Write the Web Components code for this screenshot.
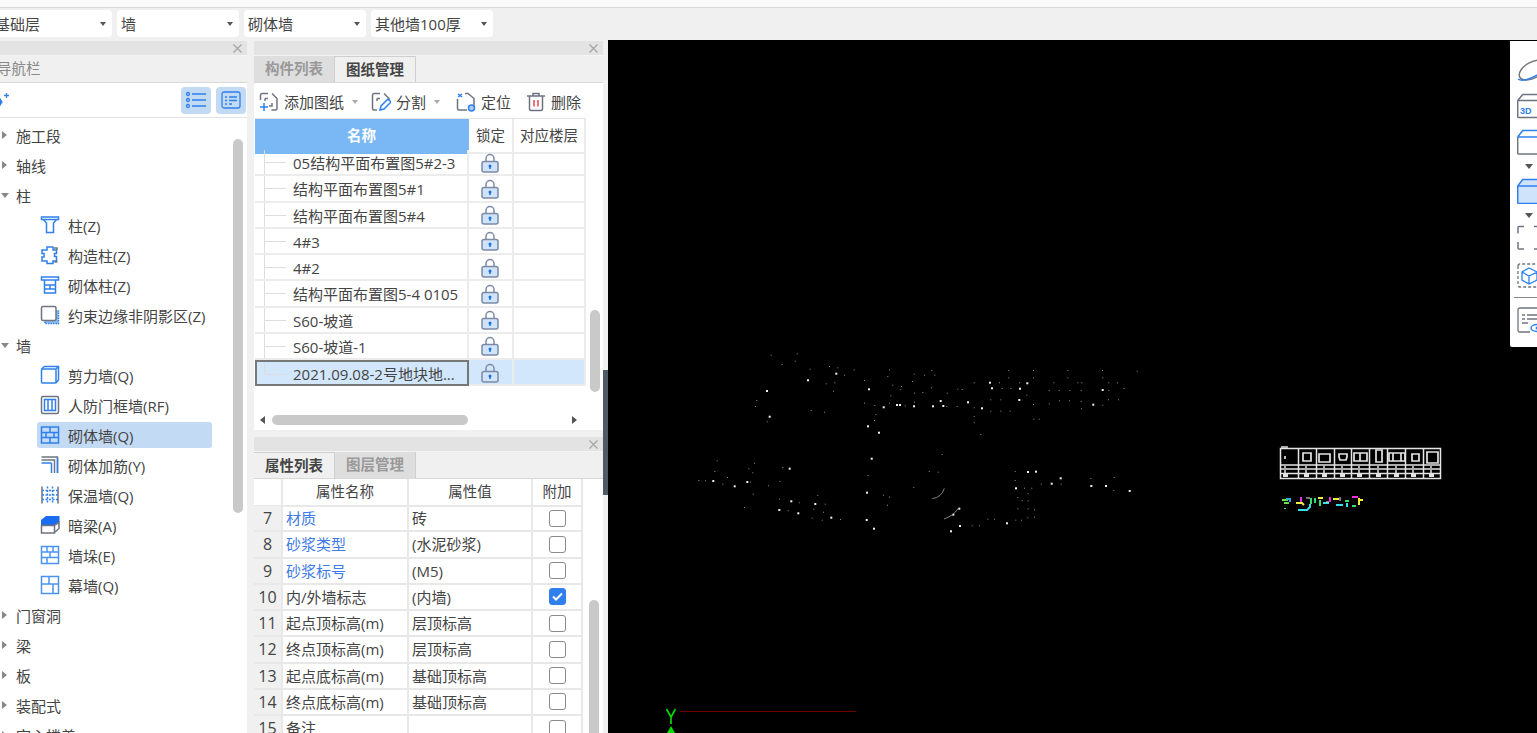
<!DOCTYPE html>
<html lang="zh">
<head>
<meta charset="utf-8">
<title>GTJ</title>
<style>
  html, body { margin: 0; height: 733px; overflow: hidden; background: #f0f0f0; }
  body { font: 15px "Open Sans", "Noto Sans CJK SC", "Liberation Sans", sans-serif; color: #444; }
</style>
</head>
<body>
<gl-app>
  <gl-topbar slot="top">
    <gl-select label="基础层" first></gl-select>
    <gl-select label="墙"></gl-select>
    <gl-select label="砌体墙"></gl-select>
    <gl-select label="其他墙100厚"></gl-select>
  </gl-topbar>

  <gl-dock slot="left" tabs="导航栏" plain>
    <gl-nav-tools></gl-nav-tools>
    <gl-nav-tree>
      <gl-nav-item group="closed" label="施工段"></gl-nav-item>
      <gl-nav-item group="closed" label="轴线"></gl-nav-item>
      <gl-nav-item group="open" label="柱"></gl-nav-item>
      <gl-nav-item icon="zhu" label="柱(Z)"></gl-nav-item>
      <gl-nav-item icon="gzz" label="构造柱(Z)"></gl-nav-item>
      <gl-nav-item icon="qtz" label="砌体柱(Z)"></gl-nav-item>
      <gl-nav-item icon="yssb" label="约束边缘非阴影区(Z)"></gl-nav-item>
      <gl-nav-item group="open" label="墙"></gl-nav-item>
      <gl-nav-item icon="jlq" label="剪力墙(Q)"></gl-nav-item>
      <gl-nav-item icon="rfm" label="人防门框墙(RF)"></gl-nav-item>
      <gl-nav-item icon="qtq" label="砌体墙(Q)" selected></gl-nav-item>
      <gl-nav-item icon="qtjj" label="砌体加筋(Y)"></gl-nav-item>
      <gl-nav-item icon="bwq" label="保温墙(Q)"></gl-nav-item>
      <gl-nav-item icon="al" label="暗梁(A)"></gl-nav-item>
      <gl-nav-item icon="qd" label="墙垛(E)"></gl-nav-item>
      <gl-nav-item icon="mq" label="幕墙(Q)"></gl-nav-item>
      <gl-nav-item group="closed" label="门窗洞"></gl-nav-item>
      <gl-nav-item group="closed" label="梁"></gl-nav-item>
      <gl-nav-item group="closed" label="板"></gl-nav-item>
      <gl-nav-item group="closed" label="装配式"></gl-nav-item>
      <gl-nav-item group="closed" label="空心楼盖"></gl-nav-item>
    </gl-nav-tree>
  </gl-dock>

  <gl-dock slot="mid-top" tabs="构件列表|图纸管理" active="1">
    <gl-drawing-tools></gl-drawing-tools>
    <gl-drawing-table></gl-drawing-table>
  </gl-dock>

  <gl-dock slot="mid-bottom" tabs="属性列表|图层管理" active="0">
    <gl-prop-table></gl-prop-table>
  </gl-dock>

  <gl-cad-canvas slot="canvas"></gl-cad-canvas>
</gl-app>

<script>
const BLUE = '#2f80ed';
const GREY = '#6d7480';

function svg(w, h, body) {
  return `<svg width="${w}" height="${h}" viewBox="0 0 ${w} ${h}" fill="none" stroke-width="1.5">${body}</svg>`;
}

// Iconos del arbol de navegacion (20x20)
const NAV_ICONS = {
  zhu: svg(20, 20, `<g stroke="${BLUE}"><path d="M1.5 2h17v2.5h-17z"/><path d="M3.5 4.500l3 3.500v9.500h7v-9.500l3-3.500"/></g>`),
  gzz: svg(20, 20, `<path stroke="${BLUE}" d="M7 2h6v3h3.500v3.500h-2v3h2v4.500h-3.500v2.500h-6v-2.500h-5v-4h2v-3.500h-2v-3.500h5z"/><path stroke="${GREY}" d="M14 3h3v2M16.500 15v2h-2"/>`),
  qtz: svg(20, 20, `<g stroke="${BLUE}"><path d="M1.500 2h17v3h-17z"/><path d="M4.500 5v13h11v-13M4.500 10h11M4.500 14h11M10 10v4"/></g>`),
  yssb: svg(20, 20, `<path fill="#8fbdf2" stroke="${BLUE}" stroke-dasharray="1.500 1" d="M5 6h13.500v12.500h-13.500z"/><rect x="1.500" y="1.500" width="14.500" height="14" rx="1.500" fill="#fff" stroke="${GREY}"/>`),
  jlq: svg(20, 20, `<g stroke="${BLUE}"><rect x="1.500" y="4" width="14.500" height="14" rx="1"/><path d="M1.500 4l3-2.500h14v13.500l-2.500 3M16 4l2.500-2.500"/></g>`),
  rfm: svg(20, 20, `<rect x="1.500" y="1.500" width="17" height="17" rx="1.500" stroke="${GREY}"/><path stroke="${BLUE}" d="M4.500 4.500h11v11h-11zM8 4.500v11M12 4.500v11"/>`),
  qtq: svg(20, 20, `<g stroke="${BLUE}"><rect x="1.500" y="2" width="17" height="16"/><path d="M1.500 7.500h17M1.500 12.500h17M10 2v5.500M6 7.500v5M14 7.500v5M10 12.500v5.500"/></g>`),
  qtjj: svg(20, 20, `<path stroke="${GREY}" d="M1.500 2h16v16M1.500 5h13v13"/><path stroke="${BLUE}" d="M1.500 8h10M11.500 8v10M17.500 3v15"/>`),
  bwq: svg(20, 20, `<path stroke="${GREY}" d="M2 1.500v17M18 1.500v17"/><path stroke="${BLUE}" stroke-dasharray="2 1.500" d="M2 5.500h16M2 10h16M2 14.500h16M7.500 1.500v17M12.500 1.500v17"/>`),
  al: svg(20, 20, `<path fill="#1a6cf0" d="M1 5l5-4h13.500v6l-5 3h-13.500z"/><path stroke="${GREY}" d="M1.500 10.500h13v7.500h-13zM14.500 10.500l4.500-3v6l-4.500 4"/>`),
  qd: svg(20, 20, `<g stroke="#4a94ef"><rect x="1.500" y="1.500" width="17" height="17"/><path d="M1.500 7h17M1.500 12.500h17M7 1.500v5.500M13 1.500v5.500M10 7v5.500M7 12.500v6"/></g>`),
  mq: svg(20, 20, `<g stroke="#4a94ef"><rect x="1.500" y="1.500" width="17" height="17"/><path d="M1.500 9h17M9 1.500v7.500M13 9v9.500"/></g>`)
};

const LOCK = svg(18, 20, `<path stroke="#7c8aa5" d="M5 9v-3.500a4 4 0 0 1 8 0v3.500"/><rect x="1" y="8.500" width="16" height="10.500" rx="2" fill="#cfe3fb" stroke="#7c8aa5"/><circle cx="9" cy="13" r="1.500" fill="#1b6fd8"/><path stroke="#1b6fd8" d="M9 13.500v2.500"/>`);

const CORNERS = `<path stroke="${GREY}" d="M9 1.500h-6a1.500 1.500 0 0 0-1.500 1.500v5M13 1.500l5 5v10a1.500 1.500 0 0 1-1.500 1.500h-4"/>`;

// Iconos de la barra de dibujos (20x20)
const TOOL_ICONS = {
  add: svg(20, 20, `${CORNERS}<path stroke="${GREY}" d="M6 6.500h3M6 6.500v2.500M10 14h3v-3"/><path stroke="${BLUE}" d="M1 15h8M5 11v8"/>`),
  split: svg(20, 20, `<path stroke="${GREY}" d="M9 1.500h-6a1.500 1.500 0 0 0-1.500 1.500v13.500a1.500 1.500 0 0 0 1.500 1.500h3M13 1.500l5 5v2M6 6.500h3M6 6.500v2.500"/><path stroke="${BLUE}" d="M9 18l1-4 7-7 3 3-7 7z"/>`),
  locate: svg(20, 20, `<path stroke="${GREY}" d="M9 1.500h3l6 5v7M1.500 7v9.500a1.500 1.500 0 0 0 1.500 1.500h8"/><path stroke="${BLUE}" d="M2 5l4-3M2 2l4 3"/><circle cx="15.500" cy="16" r="3" fill="#a9cdf6" stroke="${BLUE}"/>`),
  trash: svg(20, 20, `<path stroke="${GREY}" d="M1 4h18M7 4v-2.500h6v2.500M3.500 4v13a1.500 1.500 0 0 0 1.500 1.500h10a1.500 1.500 0 0 0 1.500-1.500v-13"/><path stroke="#e5484d" d="M8 8v6.500M12 8v6.500"/>`)
};

// Contenedor de toda la pantalla
class GlApp extends HTMLElement {
  constructor() {
    super();
    this.attachShadow({ mode: 'open' });
    this.shadowRoot.innerHTML = `
      <style>
        :host { display: flex; flex-direction: column; height: 733px; overflow: hidden; }
        .main { flex: 1; min-height: 0; display: flex; padding-top: 1px; }
        .left { width: 247px; flex: none; margin-right: 7px; display: flex; }
        .mid { width: 349px; flex: none; display: flex; flex-direction: column; gap: 7px; }
        .mid-top { height: 389px; flex: none; display: flex; }
        .mid-bottom { flex: 1; min-height: 0; display: flex; }
        .splitter { width: 5px; flex: none; margin-top: -1px; }
        .splitter i { display: block; height: 125px; margin-top: 330px; background: #505a64; }
        .canvas { flex: 1; min-width: 0; margin-top: -1px; display: flex; }
        ::slotted(:not(gl-topbar)) { flex: 1; min-width: 0; }
      </style>
      <slot name="top"></slot>
      <div class="main">
        <div class="left"><slot name="left"></slot></div>
        <div class="mid">
          <div class="mid-top"><slot name="mid-top"></slot></div>
          <div class="mid-bottom"><slot name="mid-bottom"></slot></div>
        </div>
        <div class="splitter"><i></i></div>
        <div class="canvas"><slot name="canvas"></slot></div>
      </div>`;
  }
}
customElements.define('gl-app', GlApp);

class GlTopbar extends HTMLElement {
  constructor() {
    super();
    this.attachShadow({ mode: 'open' });
    this.shadowRoot.innerHTML = `
      <style>
        :host { display: block; height: 40px; flex: none; }
        .strip { height: 7px; background: #fbfbfb; border-bottom: 1px solid #d9d9d9; }
        .row { display: flex; gap: 5px; padding-top: 2px; }
      </style>
      <div class="strip"></div>
      <div class="row"><slot></slot></div>`;
  }
}
customElements.define('gl-topbar', GlTopbar);

class GlSelect extends HTMLElement {
  constructor() {
    super();
    this.attachShadow({ mode: 'open' });
  }
  connectedCallback() {
    this.shadowRoot.innerHTML = `
      <style>
        :host { display: flex; align-items: center; justify-content: space-between; box-sizing: border-box;
                width: 122px; height: 27px; padding: 0 6px 0 4px; background: #fff; border-radius: 4px; font-size: 15px; }
        :host([first]) { margin-left: -9px; width: 121px; }
        i { border: 3.500px solid transparent; border-top: 4px solid #555; border-bottom: 0; }
      </style>
      <span>${this.getAttribute('label')}</span><i></i>`;
  }
}
customElements.define('gl-select', GlSelect);

// Panel acoplable: barra gris con la equis, pestanas y contenido
class GlDock extends HTMLElement {
  constructor() {
    super();
    this.attachShadow({ mode: 'open' });
  }
  connectedCallback() {
    const active = Number(this.getAttribute('active'));
    const plain = this.hasAttribute('plain');
    const tabs = this.getAttribute('tabs').split('|').map((t, i) =>
      `<span class="tab ${i === active ? 'on' : ''}">${t}</span>`).join('');
    this.shadowRoot.innerHTML = `
      <style>
        :host { display: flex; flex-direction: column; background: #fff; min-height: 0; overflow: hidden; }
        .bar { height: 14px; flex: none; background: #e3e3e3; display: flex; justify-content: flex-end; align-items: center; padding-right: 4px; }
        .tabs { height: 28px; flex: none; background: #f0f0f0; display: flex; border-bottom: 1px solid #d8d8d8; border-top: 1px solid #f4f4f4; box-sizing: border-box; }
        .tab { width: 81px; box-sizing: border-box; text-align: center; line-height: 26px; font-size: 14.500px; font-weight: 700; color: #999; background: #dedede; border-right: 1px solid #cfcfcf; }
        .tab.on { color: #444; background: #f0f0f0; border-top: 1px solid #cfcfcf; }
        .tabs.plain .tab { width: auto; margin-left: -3px; background: none; border: 0; font-weight: 400; color: #888; }
        .body { flex: 1; min-height: 0; display: flex; flex-direction: column; }
        .x { width: 11px; height: 11px; }
      </style>
      <div class="bar"><svg class="x" viewBox="0 0 11 11" stroke="#a5a5a5" stroke-width="1.200"><path d="M1.500 1.500l8 8M9.500 1.500l-8 8"/></svg></div>
      <div class="tabs ${plain ? 'plain' : ''}">${tabs}</div>
      <div class="body"><slot></slot></div>`;
  }
}
customElements.define('gl-dock', GlDock);

class GlNavTools extends HTMLElement {
  constructor() {
    super();
    this.attachShadow({ mode: 'open' });
    this.shadowRoot.innerHTML = `
      <style>
        :host { display: flex; align-items: center; box-sizing: border-box; height: 35px; flex: none; padding: 0 1px 0 0; gap: 5px; border-bottom: 1px solid #e2e2e2; }
        .spark { margin-right: auto; }
        .b { width: 30px; height: 27px; background: #c2daf3; border-radius: 4px; display: flex; align-items: center; justify-content: center; }
      </style>
      <svg class="spark" width="10" height="14" viewBox="0 0 10 14" stroke="${BLUE}" stroke-width="1.300" fill="none"><path d="M6.500 0v5M4 2.500h5"/><path d="M-2 9l2-3 2 3-2 3z" fill="${BLUE}"/></svg>
      <span class="b"><svg width="20" height="18" fill="none" stroke="${BLUE}" stroke-width="1.300"><path d="M6 3h14M6 9h14M6 15h14"/><circle cx="2" cy="3" r="1.500"/><circle cx="2" cy="9" r="1.500"/><circle cx="2" cy="15" r="1.500"/></svg></span>
      <span class="b"><svg width="20" height="18" fill="none" stroke="${BLUE}" stroke-width="1.300"><rect x="1" y="1" width="18" height="16" rx="2"/><path d="M4 6h2M8 6h8M4 9.500h2M8 9.500h8M4 13h2M8 13h3"/></svg></span>`;
  }
}
customElements.define('gl-nav-tools', GlNavTools);

class GlNavTree extends HTMLElement {
  constructor() {
    super();
    this.attachShadow({ mode: 'open' });
    this.shadowRoot.innerHTML = `
      <style>
        :host { display: flex; flex: 1; min-height: 0; overflow: hidden; }
        .list { flex: 1; min-width: 0; padding-top: 2px; }
        .track { width: 10px; flex: none; margin: 21px 4px 0 0; }
        .thumb { height: 374px; background: #c9c9c9; border-radius: 5px; }
      </style>
      <div class="list"><slot></slot></div>
      <div class="track"><div class="thumb"></div></div>`;
  }
}
customElements.define('gl-nav-tree', GlNavTree);

class GlNavItem extends HTMLElement {
  constructor() {
    super();
    this.attachShadow({ mode: 'open' });
  }
  connectedCallback() {
    const group = this.getAttribute('group');
    const icon = NAV_ICONS[this.getAttribute('icon')] || '';
    const arrow = group === 'open'
      ? '<i class="down"></i>'
      : '<i class="right"></i>';
    const inner = group
      ? `${arrow}<span>${this.getAttribute('label')}</span>`
      : `<span class="pill">${icon}<span>${this.getAttribute('label')}</span></span>`;
    this.shadowRoot.innerHTML = `
      <style>
        :host { display: flex; align-items: center; height: 30px; font-size: 15px; white-space: nowrap; }
        i { display: block; flex: none; margin: 0 7px 0 1px; border-style: solid; border-color: transparent; }
        i.right { width: 0; margin-left: 2px; margin-right: 9px; border-width: 4px 0 4px 5px; border-left-color: #888; }
        i.down { border-width: 5px 4px 0; border-top-color: #888; margin-right: 7px; }
        .pill { display: flex; align-items: center; gap: 8px; margin-left: 37px; padding-left: 3px; width: 172px; height: 26px; border-radius: 3px; }
        :host([selected]) .pill { background: #c2daf3; }
        svg { flex: none; }
      </style>
      ${inner}`;
  }
}
customElements.define('gl-nav-item', GlNavItem);

class GlDrawingTools extends HTMLElement {
  constructor() {
    super();
    this.attachShadow({ mode: 'open' });
    this.shadowRoot.innerHTML = `
      <style>
        :host { display: flex; align-items: center; height: 35px; flex: none; box-sizing: border-box; padding: 2px 0 0 5px; font-size: 15px; white-space: nowrap; }
        .t { display: flex; align-items: center; gap: 5px; }
        i { display: block; margin: 0 16px 0 8px; border: 3px solid transparent; border-top: 4px solid #aaa; border-bottom: 0; }
      </style>
      <span class="t">${TOOL_ICONS.add}添加图纸</span><i style="margin-right:13px"></i>
      <span class="t">${TOOL_ICONS.split}分割</span><i></i>
      <span class="t" style="margin-right:15px">${TOOL_ICONS.locate}定位</span>
      <span class="t">${TOOL_ICONS.trash}删除</span>`;
  }
}
customElements.define('gl-drawing-tools', GlDrawingTools);

const DRAWINGS = ['05结构平面布置图5#2-3', '结构平面布置图5#1', '结构平面布置图5#4', '4#3', '4#2',
  '结构平面布置图5-4 0105', 'S60-坡道', 'S60-坡道-1', '2021.09.08-2号地块地...'];

class GlDrawingTable extends HTMLElement {
  constructor() {
    super();
    this.attachShadow({ mode: 'open' });
    const filas = DRAWINGS.map((nombre, i) => `
      <div class="row ${i === DRAWINGS.length - 1 ? 'sel' : ''}">
        <div class="name"><b></b>${nombre}</div>
        <div class="lock">${LOCK}</div>
        <div class="floor"></div>
      </div>`).join('');
    this.shadowRoot.innerHTML = `
      <style>
        :host { display: flex; flex-direction: column; flex: 1; min-height: 0; }
        .area { flex: 1; min-height: 0; display: flex; }
        .table { width: 331px; flex: none; margin-left: 1px; border-top: 1px solid #e4e4e4; }
        .head, .row { display: grid; grid-template-columns: 214px 45px 72px; }
        .head { height: 31px; line-height: 33px; text-align: center; font-size: 14.500px; }
        .head div { box-sizing: border-box; border-right: 2px solid #ececec; border-bottom: 2px solid #ececec; }
        .head .n { background: #7ab8f5; color: #fff; font-weight: 700; border: 0; border-right: 1px solid #7ab8f5; }
        .row { height: 26.250px; }
        .row > div { box-sizing: border-box; border-right: 2px solid #ececec; border-bottom: 2px solid #ececec; }
        .name { position: relative; padding-left: 38px; line-height: 26px; white-space: nowrap; overflow: hidden; }
        .name b { position: absolute; left: 9px; top: 0; bottom: -2px; width: 21px; border-left: 1px solid #ddd; }
        .name b::after { content: ''; position: absolute; left: 0; right: 0; top: 12px; border-top: 1px solid #ddd; }
        .lock { display: flex; align-items: center; justify-content: center; padding: 1px 2px 0 0; }
        .sel > div { background: #d2e7fc; }
        .sel .name { border: 2px solid #777; line-height: 24px; padding-left: 36px; }
        .sel .name b { left: 7px; bottom: 10px; top: 0; }
        .vtrack { width: 10px; margin: 192px 0 0 4px; }
        .vthumb { height: 82px; background: #c9c9c9; border-radius: 5px; }
        .hbar { height: 21px; flex: none; display: flex; align-items: center; padding: 0 26px 0 6px; box-sizing: border-box; }
        .hbar i { border: 4px solid transparent; }
        .hbar .l { border-right: 5px solid #555; border-left: 0; margin-right: 7px; }
        .hbar .r { border-left: 5px solid #555; border-right: 0; margin-left: auto; }
        .hthumb { width: 196px; height: 10px; background: #c9c9c9; border-radius: 5px; }
      </style>
      <div class="area">
        <div class="table">
          <div class="head"><div class="n">名称</div><div>锁定</div><div>对应楼层</div></div>
          ${filas}
        </div>
        <div class="vtrack"><div class="vthumb"></div></div>
      </div>
      <div class="hbar"><i class="l"></i><div class="hthumb"></div><i class="r"></i></div>`;
  }
}
customElements.define('gl-drawing-table', GlDrawingTable);

const PROPS = [
  [7, '材质', '砖', 0, 1], [8, '砂浆类型', '(水泥砂浆)', 0, 1], [9, '砂浆标号', '(M5)', 0, 1],
  [10, '内/外墙标志', '(内墙)', 1, 0], [11, '起点顶标高(m)', '层顶标高', 0, 0], [12, '终点顶标高(m)', '层顶标高', 0, 0],
  [13, '起点底标高(m)', '基础顶标高', 0, 0], [14, '终点底标高(m)', '基础顶标高', 0, 0], [15, '备注', '', 0, 0]
];

class GlPropTable extends HTMLElement {
  constructor() {
    super();
    this.attachShadow({ mode: 'open' });
    const filas = PROPS.map(([n, nombre, valor, marcado, azul]) => `
      <div class="row">
        <div class="num">${n}</div>
        <div class="${azul ? 'blue' : ''}">${nombre}</div>
        <div>${valor}</div>
        <div class="chk"><span class="${marcado ? 'on' : ''}">${marcado ? '<svg width="17" height="17" fill="none" stroke="#fff" stroke-width="2"><path d="M4 8.500l3 3 6-6"/></svg>' : ''}</span></div>
      </div>`).join('');
    this.shadowRoot.innerHTML = `
      <style>
        :host { display: flex; flex: 1; min-height: 0; overflow: hidden; }
        .table { width: 329px; flex: none; }
        .row, .head { display: grid; grid-template-columns: 29px 126px 124px 50px; }
        .head { height: 27px; line-height: 26px; text-align: center; font-size: 14.500px; }
        .head div, .row > div { box-sizing: border-box; border-right: 2px solid #e8e8e8; border-bottom: 2px solid #e8e8e8; }
        .row { height: 26.250px; line-height: 24px; white-space: nowrap; }
        .row > div { padding-left: 3px; }
        .row > .num { padding: 0; background: #f0f0f0; text-align: center; font-size: 16px; }
        .blue { color: #3f7be8; }
        .row > .chk { padding: 0; display: flex; align-items: center; justify-content: center; }
        .chk span { display: block; width: 17px; height: 17px; box-sizing: border-box; border: 1px solid #8a8a8a; border-radius: 3px; }
        .chk span.on { background: ${BLUE}; border-color: ${BLUE}; }
        .chk svg { display: block; margin: -1px; }
        .vtrack { width: 10px; margin: 121px 0 0 6px; }
        .vthumb { height: 200px; background: #c9c9c9; border-radius: 5px; }
      </style>
      <div class="table">
        <div class="head"><div></div><div>属性名称</div><div>属性值</div><div>附加</div></div>
        ${filas}
      </div>
      <div class="vtrack"><div class="vthumb"></div></div>`;
  }
}
customElements.define('gl-prop-table', GlPropTable);

// Puntos del plano, en coordenadas de la captura ampliada x3 (origen 690,340)
const BRIGHT = [436,98,351,118,228,150,236,227,534,145,578,199,618,192,627,192,669,196,726,196,757,195,749,180,831,184,873,202,897,125,903,142,987,143,1009,127,985,177,1235,147,1207,191,531,256,564,275,542,353,296,383,1011,393,1035,392,975,442,1109,412,1082,428,1245,435,1201,435,1316,450,373,489,301,481,322,517,421,530,527,537,549,563,528,455,805,503,787,521,807,555,780,571,948,547,131,436,67,420,169,423,265,507];
const DIM = [242,44,320,40,275,72,314,62,359,86,417,78,442,82,462,104,491,88,407,130,433,127,429,152,199,180,195,198,362,210,402,215,230,244,522,120,597,88,592,108,607,134,633,138,631,148,601,166,522,188,553,195,597,188,644,196,672,185,672,158,666,123,671,101,702,104,724,90,733,104,723,142,697,156,770,158,769,198,800,198,802,146,815,147,851,127,851,202,851,228,851,247,871,282,556,222,552,240,901,178,931,178,901,212,931,212,959,212,927,127,935,144,961,144,955,90,955,112,987,127,1029,90,1029,112,1009,164,1029,192,1030,236,1046,236,1090,127,1076,150,1106,150,1138,150,1162,127,1174,127,1172,150,1107,181,1137,181,1172,183,1173,205,1076,190,1132,90,1132,112,1236,90,1237,112,1255,127,1281,127,1301,144,1255,150,1254,178,1284,178,1237,194,1340,92,80,361,192,368,73,393,175,385,187,397,277,381,111,411,25,420,45,421,97,431,180,425,268,423,234,436,188,461,162,501,267,476,326,487,382,465,404,491,370,506,399,515,293,511,365,533,395,539,450,537,533,405,579,464,597,470,591,494,755,342,716,393,743,395,670,441,974,393,974,420,982,471,1002,443,1024,443,1013,460,995,481,1013,481,982,505,1013,505,1032,508,1012,532,1032,530,976,539,993,539,892,536,912,536,845,556,867,556,1052,431,1112,431,1201,414,1271,411,1270,450];

function puntos(lista, tam, color) {
  let out = '';
  for (let i = 0; i < lista.length; i += 2) {
    const x = (690 - 608 + lista[i] / 3).toFixed(1);
    const y = (340 - 40 + lista[i + 1] / 3).toFixed(1);
    out += `<rect x="${x}" y="${y}" width="${tam}" height="${tam}" fill="${color}"/>`;
  }
  return out;
}

// Cuadro de detalles de la derecha, con sus simbolos por columna
function cuadro() {
  const cols = [1298, 1316, 1334, 1351, 1369, 1387, 1405, 1423];
  const marcas = [1285, 1306, 1324, 1342, 1359, 1378, 1396, 1413, 1431];
  const figs = ['M1285 456v3', 'M1303 453h8v8h-8z', 'M1319 454h11v8h-11z', 'M1339 454h8v3l-1 3h-6l-1-3z', 'M1354 453h13v8h-13zM1360 453v8', 'M1376 450h6v12h-6z', 'M1389 453h16v8h-16zM1393 453v8M1401 453v8', 'M1412 454h7v7h-7z', 'M1427 452h11v11h-11z'];
  let out = '<g stroke="#e4e4e4" stroke-width="1.500" fill="none" transform="translate(-608,-40)">';
  out += '<path d="M1281 447h7"/><rect x="1280.500" y="448.500" width="160" height="30"/>';
  cols.forEach(x => { out += `<path d="M${x}.500 449v29"/>`; });
  out += '<path d="M1280 465h161M1280 469h161M1280 473.500h161"/>';
  figs.forEach(d => { out += `<path d="${d}" stroke-width="1.700"/>`; });
  marcas.forEach(x => { out += `<path d="M${x} 466v2M${x} 470v3"/><path d="M${x - 2} 475.500h5" stroke-width="3"/>`; });
  out += '</g>';
  return out;
}

class GlCadCanvas extends HTMLElement {
  constructor() {
    super();
    this.attachShadow({ mode: 'open' });
    this.shadowRoot.innerHTML = `
      <style>
        :host { display: block; position: relative; background: #000; overflow: hidden; }
        svg.plan { position: absolute; left: 0; top: 0; width: 929px; height: 693px; }
        gl-view-tools { position: absolute; top: 1px; right: 0; }
      </style>
      <svg class="plan" viewBox="0 0 929 693" fill="none">
        ${puntos(DIM, 1, '#8a8a8a')}
        ${puntos(BRIGHT, 2, '#f2f2f2')}
        <g transform="translate(82,300) scale(0.3333)" stroke="#9a9a9a" stroke-width="2.500">
          <path d="M727 476q28-4 36-31M762 537q28-9 43-32"/>
        </g>
        ${cuadro()}
        <g transform="translate(-608,-40)" fill="none" stroke-width="2">
          <path stroke="#6ee04a" d="M1282 500h6M1284 503h5"/>
          <path stroke="#2aa8e8" d="M1286 499h4v3"/>
          <path stroke="#35e0e8" d="M1298 510h9l3-3v-3M1285 508v1"/>
          <path stroke="#ee2ee0" d="M1301 497v6M1330 497v5M1352 497h6"/>
          <path stroke="#f0f040" d="M1296 503h6l2 2M1318 498h5M1333 499h6M1359 498v7M1358 500h5"/>
          <path stroke="#35e070" d="M1311 498v6M1315 498v5M1320 500v6M1345 501h4M1352 506h4"/>
          <path stroke="#35e0e8" d="M1323 503h6M1336 505h7M1347 503v4"/>
          <path stroke="#e8e8e8" stroke-width="1" d="M1306 498h4M1326 502h3M1340 497v4"/>
          <!-- ejes -->
          <path stroke="#700000" stroke-width="1" d="M680 711.500h176"/>
          <path stroke="#00e000" stroke-width="1.600" d="M666.500 709l4.500 8v7M675.500 709l-4.500 8"/>
          <path fill="#00e000" d="M671 726l4 7h-8z"/>
        </g>
      </svg>
      <gl-view-tools></gl-view-tools>`;
  }
}

class GlViewTools extends HTMLElement {
  constructor() {
    super();
    this.attachShadow({ mode: 'open' });
    this.shadowRoot.innerHTML = `
      <style>
        :host { display: flex; flex-direction: column; box-sizing: border-box; width: 27px; height: 306px; background: #fff; overflow: hidden; padding: 0 0 0 7px; border-radius: 0 0 0 2px; }
        svg { display: block; flex: none; }
        .arrow { flex: none; margin: 9px 0 0 8px; width: 0; border: 4px solid transparent; border-top: 5px solid #555; border-bottom: 0; }
        .rule { height: 1px; background: #888; margin: 9px 0 9px -3px; flex: none; }
      </style>
      <svg width="24" height="26" style="margin-top:16px" fill="none" stroke-width="1.500"><ellipse cx="16" cy="13" rx="15" ry="8" stroke="#777" transform="rotate(-28 16 13)"/><path stroke="${BLUE}" d="M1 22c4 3 14 0 24-7"/></svg>
      <svg width="24" height="26" style="margin-top:10px" fill="none" stroke-width="1.500"><path stroke="${GREY}" d="M.7 7.500l5-6h20M.7 7.500h24M.7 7.500v16q0 1 1 1h24"/><text x="3" y="21" font-size="9" font-weight="700" fill="${BLUE}" stroke="none" font-family="Liberation Sans">3D</text></svg>
      <svg width="24" height="26" style="margin-top:10px" fill="none" stroke-width="1.500"><path stroke="${BLUE}" d="M.7 8l5-6.500h20M.7 8h24"/><path stroke="${GREY}" d="M.7 8v16q0 1 1 1h24"/></svg>
      <div class="arrow"></div>
      <svg width="24" height="26" style="margin-top:9px" fill="none" stroke-width="1.500" stroke="${BLUE}"><path d="M.7 8l5-6.500h20v24h-24q-1 0-1-1z" fill="#cfe3fb"/><path d="M.7 8h24"/></svg>
      <div class="arrow"></div>
      <svg width="24" height="26" style="margin-top:7px" fill="none" stroke-width="1.500" stroke="${GREY}"><path d="M7 1.500h-5q-1 0-1 1v6M1 17v6q0 1 1 1h5M17 1.500h7M17 24h7"/></svg>
      <svg width="24" height="25" style="margin-top:12px" fill="none" stroke-width="1.300"><path stroke="${GREY}" stroke-dasharray="3 2" d="M1 3q0-2 2-2h21M1 3v19q0 2 2 2h21"/><path stroke="${BLUE}" d="M12 5l8 4v8l-8 4-7-4v-8zM5 9l7 4 8-4M12 13v8"/></svg>
      <div class="rule"></div>
      <svg width="24" height="26" fill="none" stroke-width="1.300"><path stroke="${GREY}" d="M24 1h-21q-2 0-2 2v20q0 2 2 2h10M5 8h3M10 8h10M5 12h3M10 12h10M5 16h6"/><ellipse cx="20" cy="21" rx="6" ry="3.500" stroke="${BLUE}" stroke-width="1.500"/><circle cx="20" cy="21" r="1.500" fill="${BLUE}"/></svg>`;
  }
}
customElements.define('gl-view-tools', GlViewTools);
customElements.define('gl-cad-canvas', GlCadCanvas);
</script>
</body>
</html>
